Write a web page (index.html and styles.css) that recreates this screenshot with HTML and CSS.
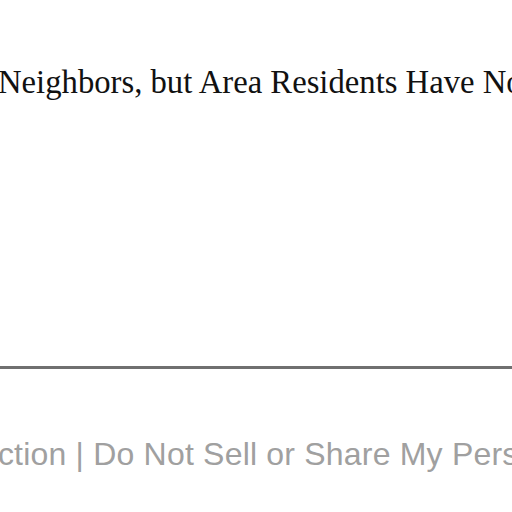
FILE: index.html
```html
<!DOCTYPE html>
<html lang="en">
<head>
<meta charset="utf-8">
<title>Article</title>
<link rel="stylesheet" href="styles.css">
</head>
<body>
<main class="page">
  <h2 class="headline">Neighbors, but Area Residents Have Not Been Told</h2>
  <div class="spacer"></div>
  <hr class="rule">
  <footer class="footer">
    <p class="legal">Collection | Do Not Sell or Share My Personal Information</p>
  </footer>
</main>
</body>
</html>
```
FILE: styles.css
```css
html, body {
  margin: 0;
  padding: 0;
  background: #ffffff;
  overflow: hidden;
}
.page {
  width: 512px;
  height: 512px;
  overflow: hidden;
  display: flex;
  flex-direction: column;
}
.headline {
  margin: 63px 0 0 -2px;
  font-family: "Liberation Serif", "Times New Roman", serif;
  font-weight: normal;
  font-size: 32.7px;
  line-height: 38px;
  color: #111111;
  white-space: nowrap;
}
.spacer {
  height: 265px;
}
.rule {
  margin: 0;
  border: 0;
  height: 3px;
  background: #707070;
  flex: none;
}
.footer {
  margin-top: 67px;
}
.legal {
  margin: 0 0 0 -76px;
  font-family: "Liberation Sans", Arial, sans-serif;
  font-size: 32px;
  letter-spacing: 0.2px;
  line-height: 36px;
  color: #a0a0a0;
  white-space: nowrap;
}
```
